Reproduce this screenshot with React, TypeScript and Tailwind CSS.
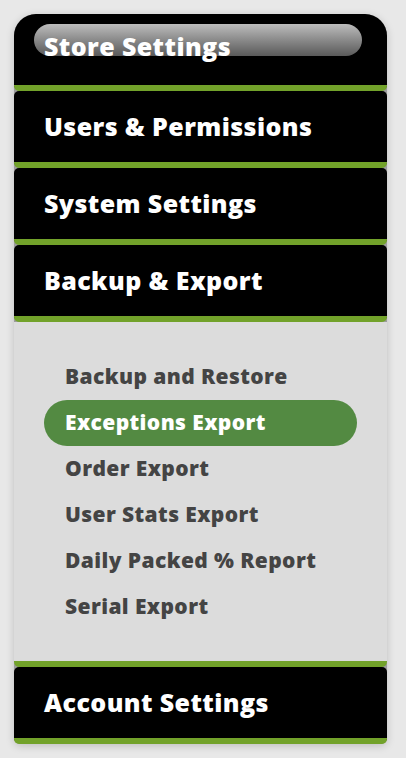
import React from "react";

const font = { fontFamily: "'Open Sans', 'Noto Sans', sans-serif" };

const Header: React.FC<{ label: string; gloss?: boolean; first?: boolean }> = ({ label, gloss, first }) => (
  <div
    className={`relative h-[77px] bg-black border-b-[6px] border-[#72a22a] flex items-center pl-[30px] ${
      first ? "rounded-t-[22px] rounded-b-[5px]" : "rounded-[5px]"
    }`}
  >
    {gloss && (
      <div className="absolute left-[20px] right-[25px] top-[10px] h-[32px] rounded-full bg-gradient-to-b from-[#bdbdbd] to-[#5a5a5a]" />
    )}
    <span className={`relative text-white text-[25px] font-extrabold tracking-[0.4px] ${first ? "-mt-[5px]" : ""}`}>
      {label}
    </span>
  </div>
);

const items = [
  "Backup and Restore",
  "Exceptions Export",
  "Order Export",
  "User Stats Export",
  "Daily Packed % Report",
  "Serial Export",
];

export default function App() {
  return (
    <div className="min-h-screen bg-[#e8e8e8] pt-[14px] px-[14px]" style={font}>
      <div className="w-[373px] bg-[#9c9c9c] rounded-t-[22px] rounded-b-[6px] shadow-[0_2px_8px_rgba(0,0,0,0.18)]">
        <Header label="Store Settings" gloss first />
        <Header label="Users & Permissions" />
        <Header label="System Settings" />
        <Header label="Backup & Export" />
        <div className="bg-[#dcdcdc] border-b-[6px] border-[#72a22a] rounded-b-[5px] pt-[32px] pb-[31px]">
          {items.map((it) => (
            <div
              key={it}
              className={`h-[46px] flex items-center ml-[30px] mr-[30px] pl-[21px] rounded-full text-[21px] font-extrabold tracking-[0.4px] ${
                it === "Exceptions Export" ? "bg-[#538a42] text-white" : "text-[#444444]"
              }`}
            >
              {it}
            </div>
          ))}
        </div>
        <Header label="Account Settings" />
      </div>
    </div>
  );
}
